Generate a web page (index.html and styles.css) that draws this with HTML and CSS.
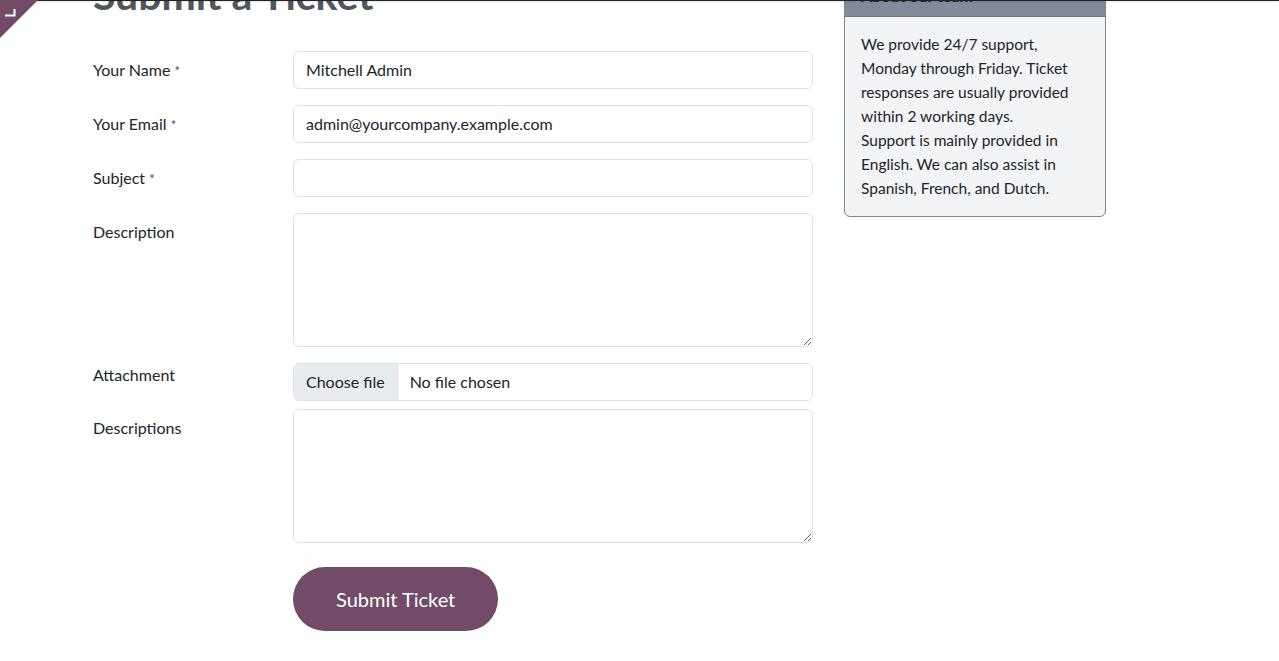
FILE: index.html
```html
<!DOCTYPE html>
<html lang="en">
<head>
<meta charset="UTF-8">
<title>Submit a Ticket</title>
<link rel="stylesheet" href="styles.css">
</head>
<body>
<div class="topline"></div>
<div class="edit-corner">
  <svg width="38" height="38" viewBox="0 0 38 38">
    <polygon points="0,0 38,0 0,38" fill="#714b67"/>
    <path d="M5 15.5H14.5V9" fill="none" stroke="#fff" stroke-width="2"/>
  </svg>
</div>

<div class="page">
  <div class="main">
    <h1>Submit a Ticket</h1>

    <form class="ticket-form">
      <div class="row">
        <label class="col-label">Your Name <span class="req">*</span></label>
        <input class="field" type="text" value="Mitchell Admin">
      </div>
      <div class="row">
        <label class="col-label">Your Email <span class="req">*</span></label>
        <input class="field" type="email" value="admin@yourcompany.example.com">
      </div>
      <div class="row">
        <label class="col-label">Subject <span class="req">*</span></label>
        <input class="field" type="text">
      </div>
      <div class="row">
        <label class="col-label">Description</label>
        <textarea class="field area"></textarea>
      </div>
      <div class="row row-tight">
        <label class="col-label no-pad">Attachment</label>
        <label class="field file">
          <span class="file-btn">Choose file</span>
          <span class="file-name">No file chosen</span>
        </label>
      </div>
      <div class="row">
        <label class="col-label">Descriptions</label>
        <textarea class="field area"></textarea>
      </div>
      <div class="row row-submit">
        <span class="col-label"></span>
        <button type="button" class="btn-submit">Submit Ticket</button>
      </div>
    </form>
  </div>

  <!-- サイドバー -->
  <div class="side-card">
    <div class="side-head">About our team</div>
    <div class="side-body">
      We provide 24/7 support,<br>
      Monday through Friday. Ticket<br>
      responses are usually provided<br>
      within 2 working days.<br>
      Support is mainly provided in<br>
      English. We can also assist in<br>
      Spanish, French, and Dutch.
    </div>
  </div>
</div>
</body>
</html>
```

FILE: styles.css
```css
body {
  font-family: Lato, "Open Sans", sans-serif;
  font-size: 16px;
  line-height: 1.5;
  margin: 0;
  background-color: #fff;
  color: #212529;
  overflow: hidden;
}

.topline {
  position: fixed;
  top: 0;
  left: 0;
  right: 0;
  height: 1px;
  background-color: #1f2427;
  box-shadow: 0 1px 2px rgba(0,0,0,0.15);
  z-index: 5;
}

.edit-corner {
  position: fixed;
  top: 0;
  left: 0;
  width: 38px;
  height: 38px;
  z-index: 6;
}

.page {
  display: flex;
  align-items: flex-start;
  padding-left: 93px;
  margin-top: -29px;
}

.main {
  width: 720px;
}

h1 {
  font-size: 41px;
  line-height: 48px;
  font-weight: 700;
  color: #51575c;
  margin: 0 0 32px;
}

.row {
  display: flex;
  align-items: flex-start;
  margin-bottom: 16px;
}

.row-tight {
  margin-bottom: 8px;
}

.row-submit {
  margin-top: 24px;
}

.col-label {
  width: 200px;
  flex-shrink: 0;
  padding-top: 7px;
  line-height: 24px;
}

.col-label.no-pad {
  padding-top: 0;
}

.req {
  font-size: 13px;
  color: #495057;
}

.field {
  width: 521px;
  box-sizing: border-box;
  height: 38px;
  padding: 5px 12px 7px;
  font-family: inherit;
  font-size: 16px;
  line-height: 24px;
  color: #212529;
  background-color: #fff;
  border: 1px solid #dee2e6;
  border-radius: 6px;
}

.field.area {
  height: 134px;
  resize: vertical;
}

.field.file {
  display: flex;
  padding: 0;
  overflow: hidden;
  cursor: pointer;
}

.file-btn {
  padding: 6px 12px;
  background-color: #e9ecef;
  border-right: 1px solid #dee2e6;
}

.file-name {
  padding: 6px 12px;
}

.btn-submit {
  height: 64px;
  padding: 0 43px;
  font-family: inherit;
  font-size: 20px;
  color: #fff;
  background-color: #714b67;
  border: none;
  border-radius: 32px;
  cursor: pointer;
}

/* サイドバー */
.side-card {
  width: 262px;
  margin-left: 31px;
  margin-top: 4px;
  box-sizing: border-box;
  border: 1px solid #7d8892;
  border-radius: 6px;
  background-color: #f3f4f6;
  overflow: hidden;
}

.side-head {
  background-color: #808d98;
  padding: 8px 16px;
  font-weight: 700;
  color: #212529;
}

.side-body {
  padding: 15px 16px 16px;
  border-top: 1px solid #6c7781;
  font-size: 15.5px;
  line-height: 24px;
}
```
